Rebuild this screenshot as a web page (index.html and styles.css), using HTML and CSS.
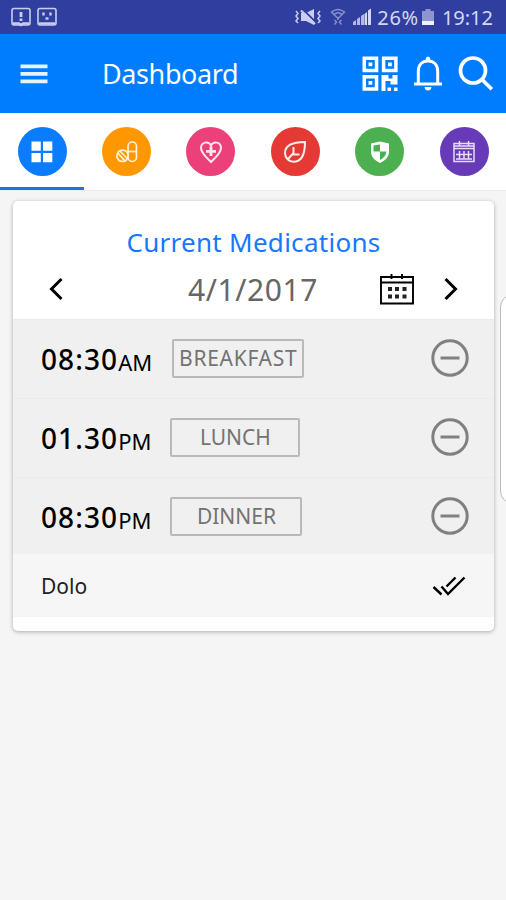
FILE: index.html
```html
<!DOCTYPE html>
<html lang="en">
<head>
  <meta charset="UTF-8">
  <meta name="viewport" content="width=device-width, initial-scale=1.0">
  <title>Dashboard</title>
  <link rel="stylesheet" href="styles.css">
</head>
<body>
  <!-- Status bar -->
  <div class="status-bar">
    <div class="status-left">
      <svg width="20" height="20" viewBox="0 0 20 20" fill="none" stroke="#c9cdf0" stroke-width="1.6">
        <rect x="1" y="1.5" width="18" height="16.5" rx="2"/>
        <path d="M2 16.5h6l2 1.500 2-1.500h6" stroke-width="2.4"/>
        <path d="M10 5v5M10 11.500v2.500" stroke-width="2.8"/>
      </svg>
      <svg width="20" height="20" viewBox="0 0 20 20" fill="none" stroke="#c9cdf0" stroke-width="1.6">
        <rect x="1" y="1.5" width="18" height="16.5" rx="2"/>
        <path d="M2 16.5h16" stroke-width="2.4"/>
        <path d="M6.500 5.500v3M13.500 5.500v3" stroke-width="2.4"/>
        <path d="M8.500 11.500h3" stroke-width="2.4"/>
      </svg>
    </div>
    <div class="status-right">
      <svg class="mute" width="28" height="18" viewBox="0 0 28 18" fill="none" stroke="#c9cdf0" stroke-width="1.5">
        <path d="M2 3l2 2.5L2 8l2 2.5L2 13l2 2M26 3l-2 2.5L26 8l-2 2.5L26 13l-2 2"/>
        <path d="M7 5h5l8-4v16l-8-4H7z" fill="#c9cdf0" stroke="none"/>
        <path d="M9 1.500l13 13" stroke="#303f9f" stroke-width="1.8"/>
        <path d="M7 2.500l14 13.500" stroke-width="2.2"/>
      </svg>
      <svg class="wifi" width="16" height="18" viewBox="0 0 16 18" fill="none" stroke="#8a92d0" stroke-width="1.4">
        <path d="M1.500 4q6.500-5 13 0L8 10.500zM4 6.500q4-3.500 8 0M8 9v3M4.500 12l2 2-2 2.500M11.500 12l-2 2 2 2.500"/>
      </svg>
      <svg class="signal" width="18" height="18" viewBox="0 0 18 18" fill="#d5d8f5">
        <path d="M0 17v-3l3-2v5zM4 17v-6l3-2v8zM8 17V8l3-2v11z" opacity=".8"/>
        <path d="M11.500 17V6l2.500-2v13zM15 17V2.500L18 .5V17z"/>
      </svg>
      <span class="percent">26%</span>
      <svg class="battery" width="12" height="18" viewBox="0 0 12 18">
        <path d="M3.500 1h5v2H12v14H0V3h3.500z" fill="#8e96d2"/>
        <path d="M0 13h12v4H0z" fill="#f0f1ff"/>
      </svg>
      <span class="clock">19:12</span>
    </div>
  </div>

  <!-- Toolbar -->
  <header class="toolbar">
    <svg class="menu" width="28" height="20" viewBox="0 0 28 20" fill="#e8f2ff">
      <path d="M.5 .5h27v3.700h-27zM.5 8h27v3.700h-27zM.5 15.500h27v3.700h-27z"/>
    </svg>
    <h1>Dashboard</h1>
    <div class="actions">
      <svg width="36" height="36" viewBox="0 0 36 36" fill="none" stroke="#fff" stroke-width="3.500">
        <path d="M2.250 2.250h12.300v12.300H2.250zM21.600 2.250h12.300v12.300H21.600zM2.250 20.800h12.300v12.300H2.250z"/>
        <path d="M6.500 6.500h3.800v3.800H6.500zM26 6.500h3.800v3.800H26zM6.500 25h3.800v3.800H6.500z" fill="#fff" stroke="none"/>
        <path d="M19.500 19h7v3.500h4V19h5v9.500h-7V25h-5v10h-4zM25.500 31.500H29V35h-3.500zM32 31.500h3.500V35H32z" fill="#fff" stroke="none"/>
      </svg>
      <svg class="bell" width="30" height="36" viewBox="0 0 30 36" fill="none" stroke="#fff" stroke-width="3">
        <path d="M1 27.900h28M5.300 28V15.500C5.300 9 9 4.900 15 4.900S24.700 9 24.700 15.500V28"/>
        <path d="M12.800 4V2q2.200-3 4.400 0v2zM11.500 31h7q-.5 3.500-3.500 3.500T11.500 31z" fill="#fff" stroke="none"/>
      </svg>
      <svg class="search" width="36" height="36" viewBox="0 0 36 36" fill="none" stroke="#fff" stroke-width="3.700">
        <circle cx="15" cy="14.500" r="12.500"/>
        <path d="M23.500 23l10.300 10.300"/>
      </svg>
    </div>
  </header>

  <!-- Category tabs -->
  <nav class="tabs">
    <a class="tab active">
      <span class="circle blue">
        <svg width="24" height="24" viewBox="0 0 24 24" fill="#fff">
          <path d="M1.500 1.500h9.300v9.300H1.500zM13 1.500h9.300v9.300H13zM1.500 13h9.300v9.300H1.500zM13 13h9.300v9.300H13z"/>
        </svg>
      </span>
    </a>
    <a class="tab">
      <span class="circle orange">
        <svg width="24" height="24" viewBox="0 0 24 24" fill="none" stroke="#fff2d8" stroke-width="1.700">
          <rect x="13" y="2" width="8.500" height="19.500" rx="4.250"/>
          <path d="M13 11.500h8.500"/>
          <circle cx="7.500" cy="15.800" r="5.700"/>
          <path d="M2.800 13.200l7.200 7.600M5 11l7.300 7.500"/>
        </svg>
      </span>
    </a>
    <a class="tab">
      <span class="circle pink">
        <svg width="24" height="24" viewBox="0 0 24 24" fill="none" stroke="#ffe6ef" stroke-width="2">
          <path d="M12 22C8 18 2 13 2 8c0-6 7.500-7.500 10-2.500C14.500.5 22 2 22 8c0 5-6 10-10 14z"/>
          <path d="M12 6.500v9.500M7 11.300h10" stroke-width="2.800"/>
        </svg>
      </span>
    </a>
    <a class="tab">
      <span class="circle red">
        <svg width="24" height="24" viewBox="0 0 24 24" fill="none" stroke="#ffecea" stroke-width="2">
          <path d="M22 2C12 2 2 4 2 13c0 5 4 8.800 8.500 8.800C19 21.800 22 13 22 2z"/>
          <path d="M4.500 19.500L10.500 13V7M9 14.500h7.500"/>
        </svg>
      </span>
    </a>
    <a class="tab">
      <span class="circle green">
        <svg width="24" height="24" viewBox="0 0 24 24">
          <path d="M12 1.500l9 2v8c0 5.500-4 9-9 11.500-5-2.500-9-6-9-11.500v-8z" fill="#fff"/>
          <path d="M12 4.500v7H5.500V5.500zM12 11.500h6.500c-.5 4-3 6.500-6.500 8.500z" fill="#4caf50"/>
        </svg>
      </span>
    </a>
    <a class="tab">
      <span class="circle purple">
        <svg width="24" height="24" viewBox="0 0 24 24" fill="none" stroke="#e6dcf8" stroke-width="1.500">
          <path d="M2 3.500h20v18H2zM2 8.500h20M2 6h20M7.500 1v5M16.500 1v5"/>
          <path d="M4 14.500h16M4 19h16M7.500 11v8M12 11v8M16.500 11v8"/>
        </svg>
      </span>
    </a>
  </nav>

  <!-- Medications card -->
  <main class="card">
    <h2>Current Medications</h2>
    <div class="date-row">
      <svg class="prev" width="14" height="24" viewBox="0 0 14 24" fill="none" stroke="#000" stroke-width="3">
        <path d="M12.500 2L2.500 12l10 10"/>
      </svg>
      <span class="date">4/1/2017</span>
      <svg class="calendar" width="34" height="32" viewBox="0 0 34 32" fill="none" stroke="#000" stroke-width="1.900">
        <path d="M1 4h32v26.500H1zM1 9.500h32M11.500 1v5M22 1v5"/>
        <path d="M8 14h4v4H8zM15 14h4v4h-4zM22.500 14h4v4h-4zM8 21.500h4v4H8zM15 21.500h4v4h-4zM22.500 21.500h4v4h-4z" fill="#222" stroke="none"/>
      </svg>
      <svg class="next" width="14" height="24" viewBox="0 0 14 24" fill="none" stroke="#000" stroke-width="3">
        <path d="M1.500 2l10 10-10 10"/>
      </svg>
    </div>

    <div class="meal">
      <span class="time">08:30</span><span class="ampm">AM</span>
      <span class="label breakfast">BREAKFAST</span>
      <svg class="minus" width="38" height="38" viewBox="0 0 38 38" fill="none" stroke="#808080" stroke-width="3">
        <circle cx="19" cy="19" r="17.200"/><path d="M9.500 19h19"/>
      </svg>
    </div>
    <div class="meal">
      <span class="time">01.30</span><span class="ampm">PM</span>
      <span class="label lunch">LUNCH</span>
      <svg class="minus" width="38" height="38" viewBox="0 0 38 38" fill="none" stroke="#808080" stroke-width="3">
        <circle cx="19" cy="19" r="17.200"/><path d="M9.500 19h19"/>
      </svg>
    </div>
    <div class="meal">
      <span class="time">08:30</span><span class="ampm">PM</span>
      <span class="label dinner">DINNER</span>
      <svg class="minus" width="38" height="38" viewBox="0 0 38 38" fill="none" stroke="#808080" stroke-width="3">
        <circle cx="19" cy="19" r="17.200"/><path d="M9.500 19h19"/>
      </svg>
    </div>
    <div class="medicine">
      <span>Dolo</span>
      <svg width="34" height="20" viewBox="0 0 34 20" fill="none" stroke="#000" stroke-width="2.400">
        <path d="M1.500 11l8 7.500M9.500 10.500l6.500 7.500L32.500 1.500M14.500 10.500l9-9"/>
      </svg>
    </div>
  </main>

  <!-- Edge panel handle -->
  <div class="edge-handle"></div>
</body>
</html>
```

FILE: styles.css
```css
/* General Styles */
* {
  box-sizing: border-box;
}

body {
  position: relative;
  margin: 0;
  height: 900px;
  overflow: hidden;
  background-color: #f5f5f5;
  font-family: 'Noto Sans', sans-serif;
}

svg {
  display: block;
  flex: none;
}

h1, h2 {
  margin: 0;
  font-weight: normal;
}

/* Status bar */
.status-bar {
  display: flex;
  justify-content: space-between;
  height: 34px;
  padding: 0 13px 0 11px;
  background-color: #303f9f;
  color: #d5d8f5;
  font-size: 20px;
  line-height: 35px;
}

.status-left {
  display: flex;
  gap: 6px;
  padding-top: 7px;
}

.status-right {
  display: flex;
  align-items: center;
}

.mute {
  margin-right: 8px;
}

.wifi {
  margin-right: 7px;
}

.signal {
  margin-right: 6px;
}

.percent {
  letter-spacing: 0.7px;
}

.battery {
  margin: 0 8px 0 3px;
}

/* Toolbar */
.toolbar {
  display: flex;
  align-items: center;
  height: 79px;
  padding: 0 12px 0 20px;
  background-color: #007dff;
}

.toolbar h1 {
  margin-left: 54px;
  color: #fff;
  font-size: 27px;
  letter-spacing: -0.4px;
  line-height: 40px;
  padding-top: 1px;
}

.actions {
  display: flex;
  margin-left: auto;
  margin-top: 1px;
}

.bell {
  margin: 0 15px;
}

/* Tabs */
.tabs {
  display: grid;
  grid-template-columns: repeat(6, 84.400px);
  height: 78px;
  background-color: #fff;
  border-bottom: 1px solid #ececec;
}

.tab {
  display: flex;
  justify-content: center;
  padding-top: 14px;
  height: 77px;
}

.tab.active {
  border-bottom: 3px solid #1a73e8;
}

.circle {
  display: flex;
  align-items: center;
  justify-content: center;
  width: 49px;
  height: 49px;
  border-radius: 50%;
}

.blue { background-color: #0a7cff; }
.orange { background-color: #ff9800; }
.pink { background-color: #ec407a; }
.red { background-color: #e53935; }
.green { background-color: #4caf50; }
.purple { background-color: #673ab7; }

/* Card */
.card {
  width: 481px;
  height: 430px;
  margin: 10px 0 0 13px;
  background-color: #fff;
  border-radius: 5px;
  box-shadow: 0 1px 4px rgba(0, 0, 0, 0.3);
}

.card h2 {
  padding-top: 22px;
  color: #1677ff;
  font-size: 26px;
  letter-spacing: 0.28px;
  line-height: 38px;
  text-align: center;
}

.date-row {
  display: flex;
  align-items: center;
  height: 58px;
  padding: 0 36px 2px 36px;
}

.date {
  margin-left: 125px;
  color: #666;
  font-size: 30px;
  letter-spacing: 0.6px;
}

.calendar {
  margin-left: auto;
}

.next {
  margin-left: 30px;
}

/* Meal rows */
.meal {
  display: flex;
  align-items: center;
  height: 79px;
  padding: 0 25px 2px 28px;
  background-color: #f0f0f0;
  border-top: 1px solid #ebebeb;
}

.time {
  color: #000;
  font-size: 28px;
  font-weight: 500;
  letter-spacing: 1.1px;
  padding-top: 2px;
}

.ampm {
  padding-top: 8px;
  font-size: 22px;
}

.label {
  height: 39px;
  border: 2px solid #b9b9b9;
  border-radius: 2px;
  color: #737373;
  font-size: 21px;
  line-height: 35px;
  text-align: center;
}

.breakfast {
  width: 132px;
  margin-left: 20px;
  letter-spacing: 0.7px;
}

.lunch {
  width: 130px;
  margin-left: 19px;
}

.dinner {
  width: 132px;
  margin-left: 19px;
}

.minus {
  margin-left: auto;
}

.medicine {
  display: flex;
  align-items: center;
  justify-content: space-between;
  height: 63px;
  margin-top: -2px;
  padding: 0 28px;
  background-color: #f6f6f6;
  color: #222;
  font-size: 21px;
}

/* Edge panel handle */
.edge-handle {
  position: absolute;
  top: 294px;
  right: -20px;
  width: 26px;
  height: 210px;
  background-color: #fff;
  border: 1px solid #bbb;
  border-radius: 14px;
}
```
